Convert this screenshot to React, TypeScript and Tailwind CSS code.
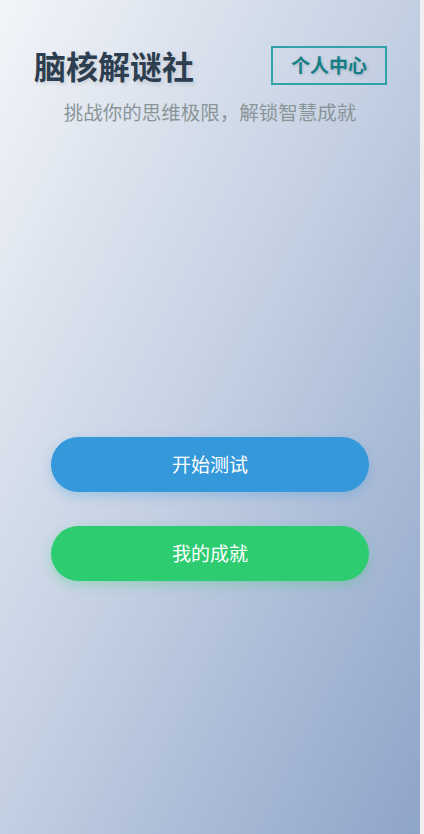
export default function App() {
  return (
    <div
      className="flex h-[834px] w-[424px] bg-[#f0f0f0]"
      style={{ fontFamily: '"Noto Sans CJK SC", "Noto Sans", sans-serif' }}
    >
      <div className="flex h-full w-[420px] flex-col bg-gradient-to-br from-[#f3f5f9] via-[#c3cfe2] to-[#8ea4c9]">
        <header className="flex items-center justify-between pl-[34px] pr-[33px] pt-[45px]">
          <h1 className="text-[32px] font-bold leading-[40px] text-[#2c3e50] [text-shadow:2px_2px_4px_rgba(0,0,0,0.12)]">
            脑核解谜社
          </h1>
          <button className="flex h-[39px] w-[116px] items-center justify-center border-2 border-[#2fa3a8] text-[19px] font-bold text-[#147e86] [text-shadow:1px_1px_3px_rgba(0,0,0,0.18)]">
            个人中心
          </button>
        </header>
        <p className="mt-[15px] text-center text-[19.5px] leading-[24px] text-[#8a9597]">
          挑战你的思维极限，解锁智慧成就
        </p>
        <div className="mt-[313px] flex flex-col items-center gap-[34px]">
          <button className="h-[55px] w-[318px] rounded-full bg-[#3498db] text-[19px] text-white shadow-[0_4px_12px_rgba(52,152,219,0.3)]">
            开始测试
          </button>
          <button className="h-[55px] w-[318px] rounded-full bg-[#2ecc71] text-[19px] text-white shadow-[0_4px_12px_rgba(46,204,113,0.3)]">
            我的成就
          </button>
        </div>
      </div>
    </div>
  )
}
